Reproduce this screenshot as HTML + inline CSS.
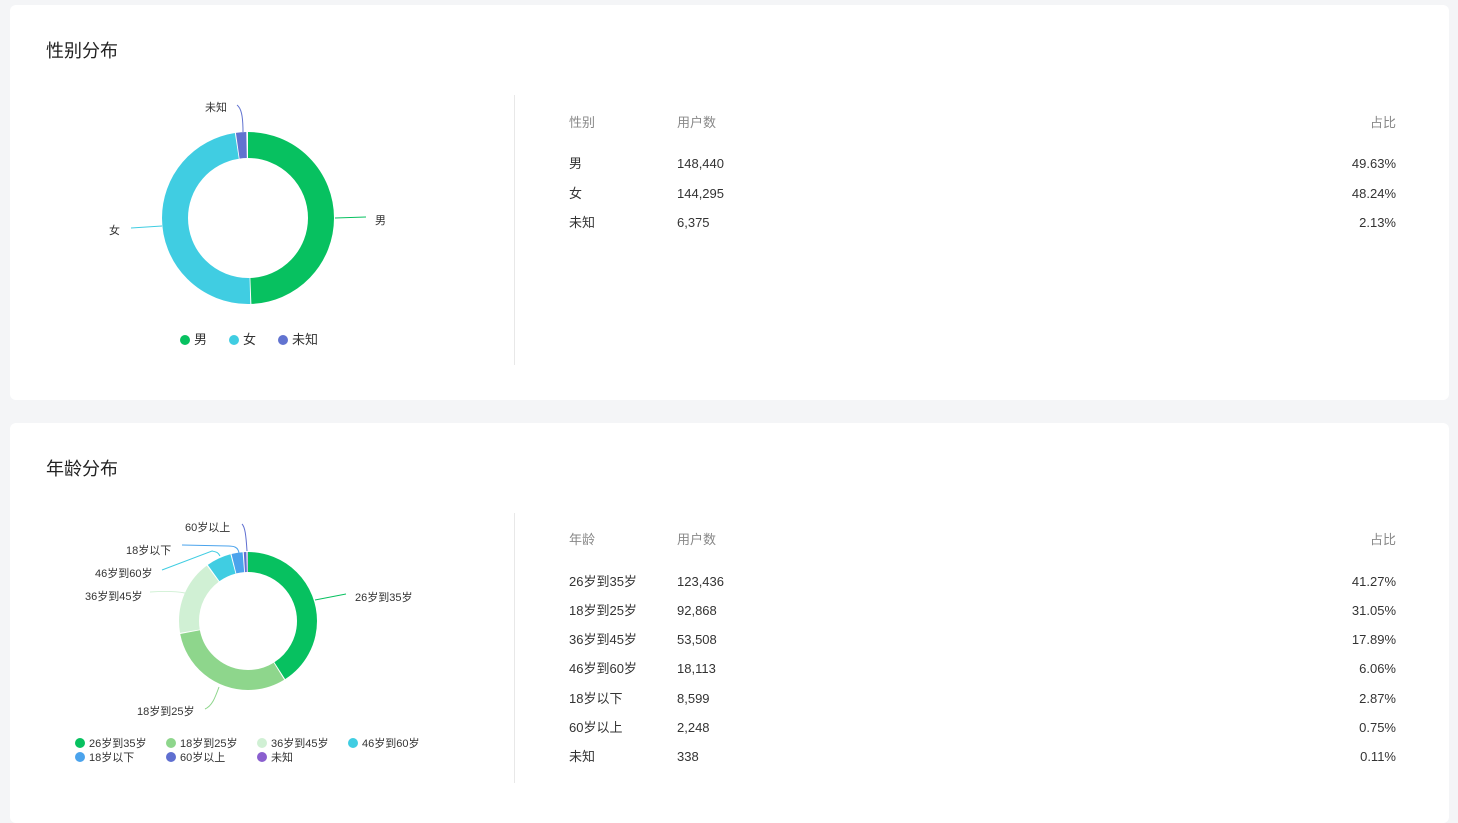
<!DOCTYPE html>
<html><head><meta charset="utf-8"><style>
*{margin:0;padding:0;box-sizing:border-box}
body{width:1458px;height:813px;background:#f4f5f7;font-family:"Liberation Sans","Noto Sans CJK SC",sans-serif;color:#333;position:relative;overflow:hidden}
.card{position:absolute;left:10px;width:1439px;background:#fff;border-radius:6px}
.t{position:absolute;white-space:nowrap;line-height:18px;margin-top:2px}
.title{font-size:18px;color:#222;line-height:24px}
.h{font-size:13px;color:#888}
.c{font-size:13px;color:#333}
.r{text-align:right;width:100px}
.lb{font-size:11px;color:#333;line-height:14px;margin-top:1px}
.dot{display:inline-block;width:10px;height:10px;border-radius:50%;vertical-align:-1px;margin-right:4px}
.vl{position:absolute;left:514px;width:1px;background:#e8e8e8}
</style></head><body>
<div class="card" style="top:5px;height:395px"></div>
<div class="card" style="top:423px;height:400px"></div>

<div class="t title" style="left:46px;top:37px">性别分布</div>
<div class="vl" style="top:95px;height:270px"></div>
<svg style="position:absolute;left:0;top:0" width="520" height="400">
<g transform="rotate(-90 248 218)" fill="none" stroke-width="26">
<circle cx="248" cy="218" r="73" pathLength="100" stroke="#07c160" stroke-dasharray="49.43 100" stroke-dashoffset="0"/>
<circle cx="248" cy="218" r="73" pathLength="100" stroke="#40cde2" stroke-dasharray="48.04 100" stroke-dashoffset="-49.63"/>
<circle cx="248" cy="218" r="73" pathLength="100" stroke="#6173d0" stroke-dasharray="1.93 100" stroke-dashoffset="-97.87"/>
</g>
<path d="M335 218 L366 217" stroke="#07c160" fill="none"/>
<path d="M162 226 L131 228" stroke="#40cde2" fill="none"/>
<path d="M243 132 C243 115 241 108 237 105" stroke="#6173d0" fill="none"/>
</svg>
<div class="t lb" style="left:375px;top:213px">男</div>
<div class="t lb" style="left:109px;top:223px">女</div>
<div class="t lb" style="left:205px;top:100px">未知</div>
<div class="t" style="left:180px;top:329px;font-size:13px"><span class="dot" style="background:#07c160"></span>男<span class="dot" style="background:#40cde2;margin-left:22px"></span>女<span class="dot" style="background:#6173d0;margin-left:22px"></span>未知</div>

<div class="t h" style="left:569px;top:112px">性别</div>
<div class="t h" style="left:677px;top:112px">用户数</div>
<div class="t h r" style="left:1296px;top:112px">占比</div>
<div class="t c" style="left:569px;top:153px">男</div><div class="t c" style="left:677px;top:153px">148,440</div><div class="t c r" style="left:1296px;top:153px">49.63%</div>
<div class="t c" style="left:569px;top:183px">女</div><div class="t c" style="left:677px;top:183px">144,295</div><div class="t c r" style="left:1296px;top:183px">48.24%</div>
<div class="t c" style="left:569px;top:212px">未知</div><div class="t c" style="left:677px;top:212px">6,375</div><div class="t c r" style="left:1296px;top:212px">2.13%</div>

<div class="t title" style="left:46px;top:455px">年龄分布</div>
<div class="vl" style="top:513px;height:270px"></div>
<svg style="position:absolute;left:0;top:0" width="520" height="813">
<g transform="rotate(-90 248 621)" fill="none" stroke-width="20">
<circle cx="248" cy="621" r="59" pathLength="100" stroke="#07c160" stroke-dasharray="41.0 100" stroke-dashoffset="0"/>
<circle cx="248" cy="621" r="59" pathLength="100" stroke="#8ed68c" stroke-dasharray="30.8 100" stroke-dashoffset="-41.27"/>
<circle cx="248" cy="621" r="59" pathLength="100" stroke="#d0f0d4" stroke-dasharray="17.6 100" stroke-dashoffset="-72.32"/>
<circle cx="248" cy="621" r="59" pathLength="100" stroke="#40cde2" stroke-dasharray="5.8 100" stroke-dashoffset="-90.21"/>
<circle cx="248" cy="621" r="59" pathLength="100" stroke="#4ba3ec" stroke-dasharray="2.6 100" stroke-dashoffset="-96.27"/>
<circle cx="248" cy="621" r="59" pathLength="100" stroke="#5f6fd0" stroke-dasharray="0.6 100" stroke-dashoffset="-99.14"/>
<circle cx="248" cy="621" r="59" pathLength="100" stroke="#8a5fcf" stroke-dasharray="0.11 100" stroke-dashoffset="-99.89"/>
</g>
<path d="M315 600 L346 594" stroke="#07c160" fill="none"/>
<path d="M219 687 C215 698 212 706 205 709" stroke="#8ed68c" fill="none"/>
<path d="M185 593 C175 591 165 591 150 592" stroke="#d0f0d4" fill="none"/>
<path d="M220 556 C218 552 216 552 212 551 L162 570" stroke="#40cde2" fill="none"/>
<path d="M239 553 C238 547 234 546 228 546 L182 545" stroke="#4ba3ec" fill="none"/>
<path d="M247 551 C246 535 245 527 242 524" stroke="#5f6fd0" fill="none"/>
</svg>
<div class="t lb" style="left:355px;top:590px">26岁到35岁</div>
<div class="t lb" style="left:137px;top:704px">18岁到25岁</div>
<div class="t lb" style="left:85px;top:589px">36岁到45岁</div>
<div class="t lb" style="left:95px;top:566px">46岁到60岁</div>
<div class="t lb" style="left:126px;top:543px">18岁以下</div>
<div class="t lb" style="left:185px;top:520px">60岁以上</div>
<div class="t lb" style="left:75px;top:736px"><span class="dot" style="background:#07c160"></span>26岁到35岁</div>
<div class="t lb" style="left:166px;top:736px"><span class="dot" style="background:#8ed68c"></span>18岁到25岁</div>
<div class="t lb" style="left:257px;top:736px"><span class="dot" style="background:#d0f0d4"></span>36岁到45岁</div>
<div class="t lb" style="left:348px;top:736px"><span class="dot" style="background:#40cde2"></span>46岁到60岁</div>
<div class="t lb" style="left:75px;top:750px"><span class="dot" style="background:#4ba3ec"></span>18岁以下</div>
<div class="t lb" style="left:166px;top:750px"><span class="dot" style="background:#5f6fd0"></span>60岁以上</div>
<div class="t lb" style="left:257px;top:750px"><span class="dot" style="background:#8a5fcf"></span>未知</div>

<div class="t h" style="left:569px;top:529px">年龄</div>
<div class="t h" style="left:677px;top:529px">用户数</div>
<div class="t h r" style="left:1296px;top:529px">占比</div>
<div class="t c" style="left:569px;top:571px">26岁到35岁</div><div class="t c" style="left:677px;top:571px">123,436</div><div class="t c r" style="left:1296px;top:571px">41.27%</div>
<div class="t c" style="left:569px;top:600px">18岁到25岁</div><div class="t c" style="left:677px;top:600px">92,868</div><div class="t c r" style="left:1296px;top:600px">31.05%</div>
<div class="t c" style="left:569px;top:629px">36岁到45岁</div><div class="t c" style="left:677px;top:629px">53,508</div><div class="t c r" style="left:1296px;top:629px">17.89%</div>
<div class="t c" style="left:569px;top:658px">46岁到60岁</div><div class="t c" style="left:677px;top:658px">18,113</div><div class="t c r" style="left:1296px;top:658px">6.06%</div>
<div class="t c" style="left:569px;top:688px">18岁以下</div><div class="t c" style="left:677px;top:688px">8,599</div><div class="t c r" style="left:1296px;top:688px">2.87%</div>
<div class="t c" style="left:569px;top:717px">60岁以上</div><div class="t c" style="left:677px;top:717px">2,248</div><div class="t c r" style="left:1296px;top:717px">0.75%</div>
<div class="t c" style="left:569px;top:746px">未知</div><div class="t c" style="left:677px;top:746px">338</div><div class="t c r" style="left:1296px;top:746px">0.11%</div>
</body></html>
